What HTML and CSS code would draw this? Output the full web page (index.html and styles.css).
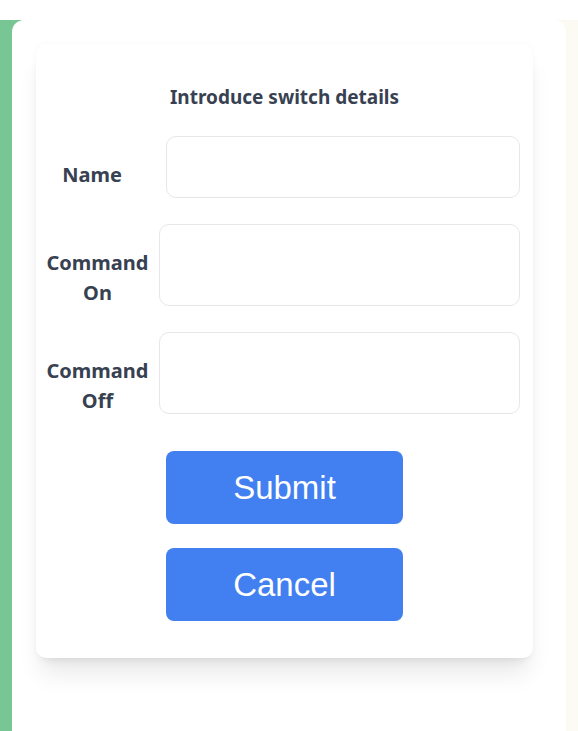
FILE: index.html
```html
<!DOCTYPE html>
<html lang="en">
<head>
<meta charset="utf-8">
<title>Introduce switch details</title>
<link rel="stylesheet" href="styles.css">
</head>
<body>
<div class="shell">
  <main class="panel">
    <form class="card">
      <h2 class="title">Introduce switch details</h2>
      <div class="row row-name">
        <label class="label label-name" for="name">Name</label>
        <input class="field field-short" id="name" type="text">
      </div>
      <div class="row row-cmd">
        <label class="label label-cmd" for="on">Command<br>On</label>
        <input class="field field-tall" id="on" type="text">
      </div>
      <div class="row row-cmd">
        <label class="label label-cmd" for="off">Command<br>Off</label>
        <input class="field field-tall" id="off" type="text">
      </div>
      <div class="actions">
        <button class="btn" type="button">Submit</button>
        <button class="btn" type="button">Cancel</button>
      </div>
    </form>
  </main>
</div>
</body>
</html>
```
FILE: styles.css
```css
* { box-sizing: border-box; }
html, body { margin: 0; padding: 0; background: #ffffff; }
body {
  width: 578px;
  height: 731px;
  overflow: hidden;
  font-family: "Noto Sans", "Open Sans", sans-serif;
  color: #374151;
}
.shell {
  margin-top: 20px;
  height: 711px;
  display: flex;
  padding: 0 12px;
  background: linear-gradient(to right, #79c695 0, #79c695 50%, #fbfbf3 50%, #fbfbf3 100%);
}
.panel {
  flex: 1;
  background: #ffffff;
  border-radius: 12px 12px 0 0;
  padding: 24px 33px 0 24px;
}
.card {
  background: #ffffff;
  border-radius: 10px;
  box-shadow: 0 20px 25px -5px rgba(0,0,0,0.09), 0 8px 10px -6px rgba(0,0,0,0.08), 0 0 6px rgba(0,0,0,0.03);
  padding: 39px 0 37px 0;
  display: flex;
  flex-direction: column;
}
.title {
  margin: 0 0 25px 0;
  font-size: 19px;
  line-height: 28px;
  font-weight: 700;
  text-align: center;
}
.row {
  display: flex;
  align-items: flex-start;
  padding-right: 13px;
  margin-bottom: 26px;
}
.label {
  flex: none;
  padding-top: 24px;
  font-size: 20px;
  line-height: 30px;
  font-weight: 700;
  text-align: center;
}
.label-name { width: 112px; height: 62px; margin-right: 18px; }
.label-cmd { width: 123px; height: 82px; }
.field {
  flex: 1;
  min-width: 0;
  border: 1px solid #e5e7eb;
  border-radius: 10px;
  background: #ffffff;
  font-size: 16px;
  outline: none;
}
.field-short { height: 62px; }
.field-tall { height: 82px; }
.actions {
  margin-top: 11px;
  display: flex;
  flex-direction: column;
  align-items: center;
  gap: 24px;
}
.btn {
  width: 237px;
  height: 73px;
  border: none;
  border-radius: 8px;
  background: #427ff0;
  color: #ffffff;
  font-family: "Liberation Sans", Arial, sans-serif;
  font-size: 33px;
  cursor: pointer;
}
```
